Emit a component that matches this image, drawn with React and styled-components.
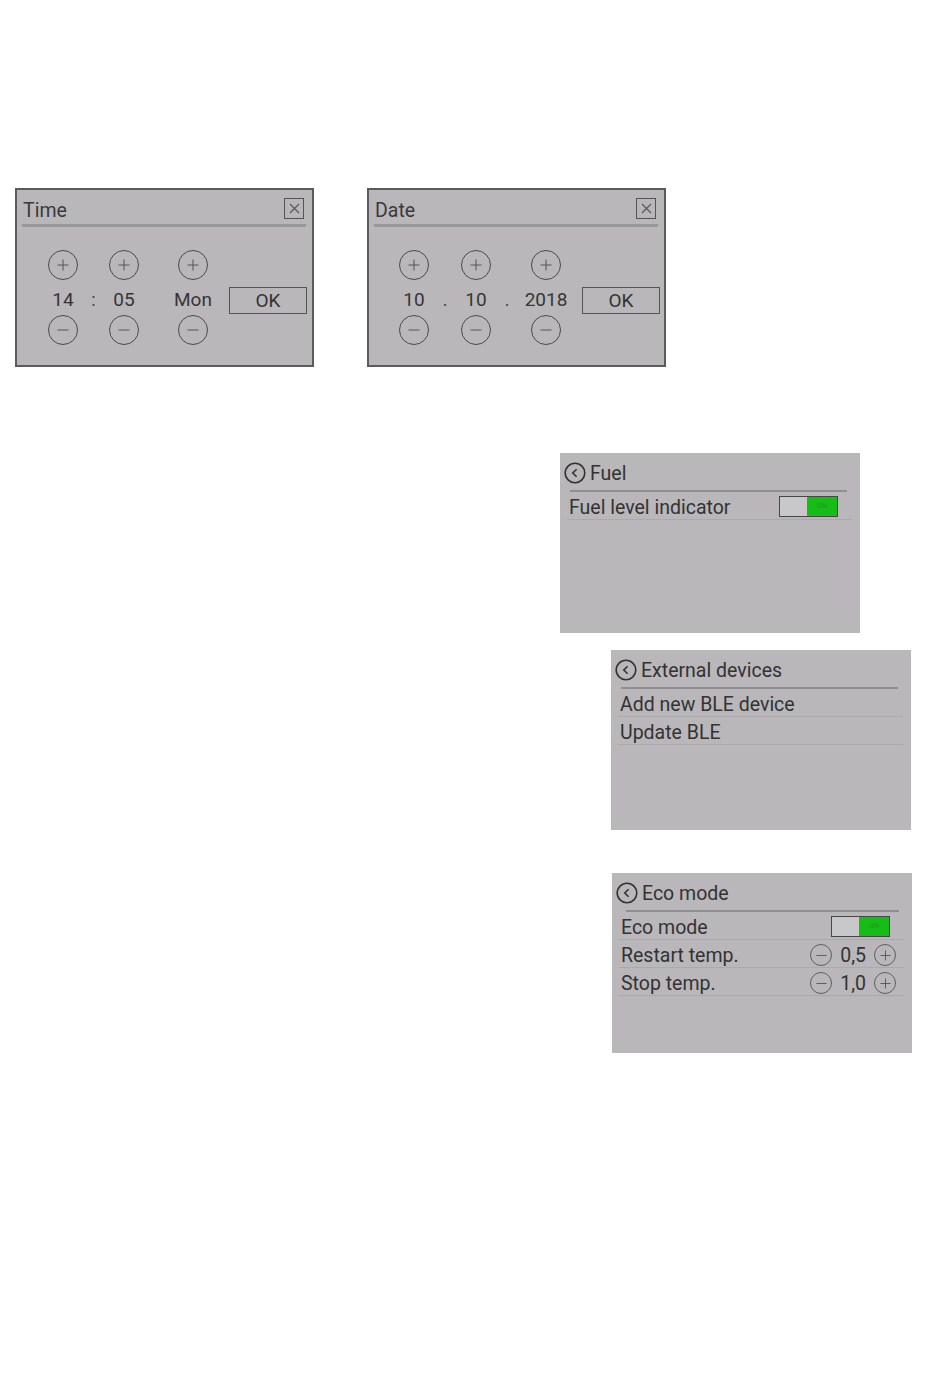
import styled, { createGlobalStyle } from 'styled-components'

const GlobalStyle = createGlobalStyle`
  html, body {
    margin: 0;
    padding: 0;
    background: #ffffff;
  }
  body {
    font-family: Roboto, "Liberation Sans", sans-serif;
    color: #333333;
  }
`

const PlusIcon = () => (
  <svg width="12" height="12" viewBox="0 0 12 12">
    <path d="M6 0.5v11M0.5 6h11" stroke="#555" strokeWidth="1" fill="none" />
  </svg>
)

const MinusIcon = () => (
  <svg width="12" height="12" viewBox="0 0 12 12">
    <path d="M0.5 6h11" stroke="#555" strokeWidth="1" fill="none" />
  </svg>
)

const CloseIcon = () => (
  <svg width="11" height="11" viewBox="0 0 11 11">
    <path d="M1 1l9 9M10 1l-9 9" stroke="#555" strokeWidth="1.1" fill="none" />
  </svg>
)

const BackIcon = () => (
  <svg width="22" height="22" viewBox="0 0 22 22">
    <circle cx="11" cy="11" r="9.8" stroke="#333" strokeWidth="1.6" fill="none" />
    <path d="M12.6 7.2L8.8 11l3.8 3.8" stroke="#333" strokeWidth="1.6" fill="none" />
  </svg>
)

function Spinner({ value, width }) {
  return (
    <SpinColumn $width={width}>
      <RoundButton><PlusIcon /></RoundButton>
      <SpinValue>{value}</SpinValue>
      <RoundButton><MinusIcon /></RoundButton>
    </SpinColumn>
  )
}

function Dialog({ title, items, inset, okGap }) {
  return (
    <DialogBox>
      <DialogHeader>
        <DialogTitle>{title}</DialogTitle>
        <CloseBox><CloseIcon /></CloseBox>
      </DialogHeader>
      <DialogBody $inset={inset}>
        {items.map((it, i) =>
          it.sep !== undefined
            ? <Separator key={i} $width={it.width}>{it.sep}</Separator>
            : <Spinner key={i} value={it.value} width={it.width} />
        )}
        <OkButton $gap={okGap}>OK</OkButton>
      </DialogBody>
    </DialogBox>
  )
}

function Toggle() {
  return (
    <ToggleBox>
      <ToggleOff />
      <ToggleOn>ON</ToggleOn>
    </ToggleBox>
  )
}

function Stepper({ value }) {
  return (
    <StepperWrap>
      <SmallRound><MinusIcon /></SmallRound>
      <StepValue>{value}</StepValue>
      <SmallRound><PlusIcon /></SmallRound>
    </StepperWrap>
  )
}

function SettingsPanel({ title, rows, offset, top, lineInset }) {
  return (
    <Panel $offset={offset} $top={top}>
      <PanelHeader>
        <BackIcon />
        <PanelTitle>{title}</PanelTitle>
      </PanelHeader>
      <HeaderLine $inset={lineInset} />
      {rows.map((r) => (
        <Row key={r.label}>
          <RowLabel>{r.label}</RowLabel>
          {r.toggle && <Toggle />}
          {r.step && <Stepper value={r.step} />}
        </Row>
      ))}
    </Panel>
  )
}

export default function App() {
  const timeItems = [
    { value: '14', width: 40 },
    { sep: ':', width: 21 },
    { value: '05', width: 40 },
    { sep: '', width: 29 },
    { value: 'Mon', width: 40 },
  ]
  const dateItems = [
    { value: '10', width: 40 },
    { sep: '.', width: 22 },
    { value: '10', width: 40 },
    { sep: '.', width: 22 },
    { value: '2018', width: 56 },
  ]

  return (
    <Page>
      <GlobalStyle />
      <DialogRow>
        <Dialog title="Time" items={timeItems} inset={26} okGap={16} />
        <Dialog title="Date" items={dateItems} inset={25} okGap={8} />
      </DialogRow>
      <SettingsPanel
        title="Fuel"
        offset={545}
        top={86}
        lineInset={10}
        rows={[{ label: 'Fuel level indicator', toggle: true }]}
      />
      <SettingsPanel
        title="External devices"
        offset={596}
        top={17}
        lineInset={10}
        rows={[{ label: 'Add new BLE device' }, { label: 'Update BLE' }]}
      />
      <SettingsPanel
        title="Eco mode"
        offset={597}
        top={43}
        lineInset={14}
        rows={[
          { label: 'Eco mode', toggle: true },
          { label: 'Restart temp.', step: '0,5' },
          { label: 'Stop temp.', step: '1,0' },
        ]}
      />
    </Page>
  )
}

const Page = styled.div`
  width: 950px;
  min-height: 1397px;
  box-sizing: border-box;
  padding: 188px 0 0 15px;
  display: flex;
  flex-direction: column;
  align-items: flex-start;
`

const DialogRow = styled.div`
  display: flex;
  gap: 53px;
`

const DialogBox = styled.div`
  width: 299px;
  height: 179px;
  box-sizing: border-box;
  border: 2px solid #5b5b5d;
  background: #b9b7ba;
  display: flex;
  flex-direction: column;
`

const DialogHeader = styled.div`
  height: 34px;
  margin: 0 6px 0 5px;
  border-bottom: 3px solid #98979a;
  display: flex;
  align-items: center;
  justify-content: space-between;
  padding: 0 2px 0 1px;
`

const DialogTitle = styled.span`
  font-size: 19.5px;
  color: #3a3a3a;
  padding-top: 7px;
`

const CloseBox = styled.div`
  width: 20px;
  height: 21px;
  box-sizing: border-box;
  border: 1.5px solid #555;
  display: flex;
  align-items: center;
  justify-content: center;
  margin-top: 2px;
`

const DialogBody = styled.div`
  display: flex;
  align-items: center;
  padding: 23px 0 0 ${(p) => p.$inset}px;
`

const SpinColumn = styled.div`
  width: ${(p) => p.$width}px;
  display: flex;
  flex-direction: column;
  align-items: center;
`

const RoundButton = styled.div`
  width: 30px;
  height: 30px;
  box-sizing: border-box;
  border: 1.2px solid #4a4a4a;
  border-radius: 50%;
  display: flex;
  align-items: center;
  justify-content: center;
`

const SpinValue = styled.div`
  height: 35px;
  box-sizing: border-box;
  padding-top: 2px;
  line-height: 35px;
  font-size: 19px;
  color: #363636;
`

const Separator = styled.div`
  width: ${(p) => p.$width}px;
  text-align: center;
  font-size: 18px;
  color: #444;
  padding-top: 4px;
`

const OkButton = styled.div`
  margin-left: ${(p) => p.$gap}px;
  margin-top: 6px;
  width: 78px;
  height: 27px;
  box-sizing: border-box;
  border: 1.5px solid #555;
  display: flex;
  align-items: center;
  justify-content: center;
  font-size: 19px;
  color: #333;
`

const Panel = styled.div`
  margin-top: ${(p) => p.$top}px;
  margin-left: ${(p) => p.$offset}px;
  width: 300px;
  height: 180px;
  background: #b9b7ba;
  display: flex;
  flex-direction: column;
`

const PanelHeader = styled.div`
  height: 37px;
  display: flex;
  align-items: center;
  gap: 4px;
  padding: 3px 0 0 4px;
  box-sizing: border-box;
`

const PanelTitle = styled.span`
  font-size: 19.5px;
  color: #333;
`

const HeaderLine = styled.div`
  height: 2px;
  background: #8f8e91;
  margin: 0 13px 0 ${(p) => p.$inset}px;
`

const Row = styled.div`
  height: 28px;
  box-sizing: border-box;
  margin: 0 8px 0 7px;
  border-bottom: 1px solid #aaa9ac;
  display: flex;
  align-items: center;
  justify-content: space-between;
  padding: 3px 0 0 2px;
`

const RowLabel = styled.span`
  font-size: 19.5px;
  color: #333;
`

const ToggleBox = styled.div`
  width: 59px;
  height: 21px;
  box-sizing: border-box;
  border: 1px solid #474747;
  display: flex;
  margin: -2px 14px 0 0;
`

const ToggleOff = styled.div`
  flex: 1;
  background: #c8c7c9;
`

const ToggleOn = styled.div`
  width: 30px;
  background: #17bd17;
  color: #2e8a2e;
  font-size: 7px;
  display: flex;
  align-items: center;
  justify-content: center;
`

const StepperWrap = styled.div`
  display: flex;
  align-items: center;
  gap: 8px;
  margin: 0 8px 0 0;
`

const SmallRound = styled.div`
  width: 22px;
  height: 22px;
  box-sizing: border-box;
  border: 1px solid #5f5f5f;
  border-radius: 50%;
  display: flex;
  align-items: center;
  justify-content: center;
  svg {
    width: 11px;
    height: 11px;
  }
`

const StepValue = styled.span`
  font-size: 19.5px;
  color: #333;
`
